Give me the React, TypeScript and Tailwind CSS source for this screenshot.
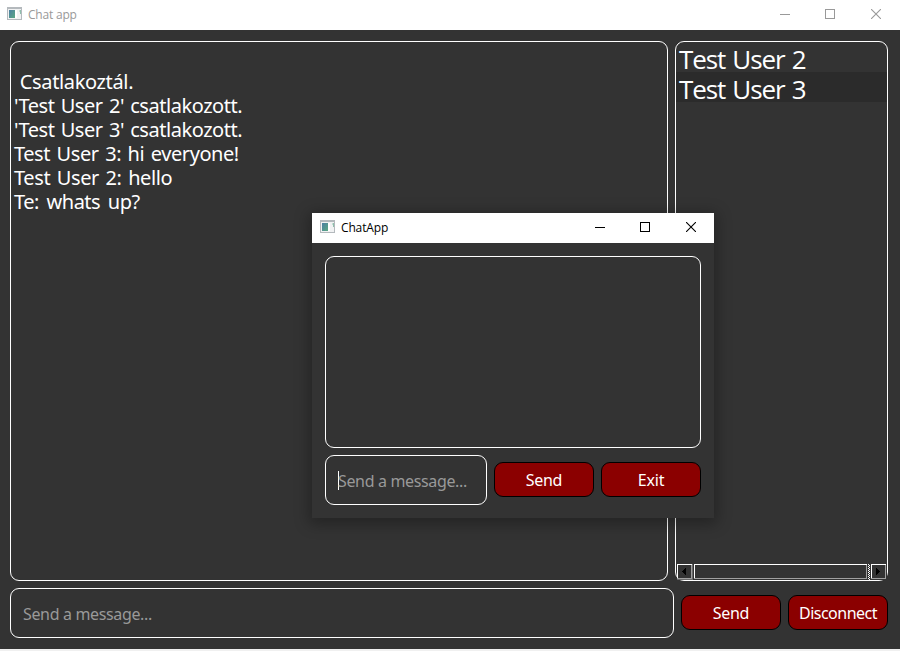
import React from "react";

function AppIcon() {
  return (
    <svg width="15" height="13" viewBox="0 0 15 13" shapeRendering="crispEdges" className="mb-[3px] shrink-0">
      <defs>
        <linearGradient id="pane" x1="0" y1="0" x2="1" y2="1">
          <stop offset="0" stopColor="#4b7fa3" />
          <stop offset="1" stopColor="#5aa882" />
        </linearGradient>
      </defs>
      <rect width="15" height="13" fill="#b4b9bd" />
      <rect x="1" y="2" width="13" height="10" fill="#f1f2f3" />
      <rect x="2" y="3" width="6" height="8" fill="url(#pane)" />
      <rect x="8" y="3" width="2" height="8" fill="#ffffff" />
      <rect x="12" y="3" width="1" height="2" fill="#c5ddd4" />
      <rect x="13" y="3" width="1" height="4" fill="#8fbfac" />
    </svg>
  );
}

function TitleBar({ title, active }: { title: string; active?: boolean }) {
  return (
    <div className={`flex h-[30px] shrink-0 items-center bg-white ${active ? "pr-[17px] pl-2 text-black" : "pr-[18px] pl-[7px] text-[#999999]"}`}>
      <AppIcon />
      <span className={`ml-1.5 font-['Open_Sans','Noto_Sans',sans-serif] text-[12px] leading-[16px] ${active ? "tracking-[-0.15px]" : "tracking-[-0.2px]"}`}>
        {title}
      </span>
      <div className="mb-0.5 ml-auto flex items-center">
        <svg width="10" height="10" shapeRendering="crispEdges"><path d="M0 5.5h10" stroke="currentColor" /></svg>
        <svg width="10" height="10" shapeRendering="crispEdges" className="ml-[35px]"><path d="M.5.5h9v9h-9z" fill="none" stroke="currentColor" /></svg>
        <svg width="10" height="10" className="mr-px ml-9"><path d="M0 0l10 10M10 0l-10 10" stroke="currentColor" strokeWidth="1.1" /></svg>
      </div>
    </div>
  );
}

function RedButton({ label, tracking }: { label: string; tracking: string }) {
  return (
    <button className={`mb-px flex h-[35px] w-[100px] shrink-0 items-center justify-center rounded-[9px] border border-black bg-[#8b0000] pt-px font-['Noto_Sans',sans-serif] text-[16px] leading-[24px] text-white ${tracking}`}>
      {label}
    </button>
  );
}

function Placeholder() {
  return <span className="block pt-0.5 font-['Noto_Sans',sans-serif] text-[16px] tracking-[-0.35px] whitespace-nowrap text-[#999999]">Send a message...</span>;
}

const messages = [
  { text: "\u00a0Csatlakoztál.", spacing: "tracking-[-0.36px] [word-spacing:1px]" },
  { text: "'Test User 2' csatlakozott.", spacing: "tracking-[-0.45px] [word-spacing:1.5px]" },
  { text: "'Test User 3' csatlakozott.", spacing: "tracking-[-0.45px] [word-spacing:1.5px]" },
  { text: "Test User 3: hi everyone!", spacing: "tracking-[-0.44px] [word-spacing:1.8px]" },
  { text: "Test User 2: hello", spacing: "tracking-[-0.4px] [word-spacing:1.8px]" },
  { text: "Te: whats up?", spacing: "tracking-[-0.5px] [word-spacing:3px]" },
];

function ScrollBar() {
  return (
    <svg width="210" height="16" shapeRendering="crispEdges" className="ml-px block">
      <rect width="210" height="16" fill="#333333" />
      <path d="M.5 15V.5H15M17.5 15V.5H190M194.5 15V.5H209" fill="none" stroke="#ffffff" />
      <path d="M0 14.5H15M14.5 1V15M17 14.5H190M189.5 1V15M194 14.5H209M208.5 1V15" stroke="#a0a0a0" />
      <path d="M0 15.5H16M15.5 0V16" stroke="#696969" />
      <path d="M5 7h1v-1h1v-1h1v-1h1v7h-1v-1h-1v-1h-1v-1h-1z" fill="#000000" />
      <path d="M199 4h1v1h1v1h1v1h1v1h-1v1h-1v1h-1v1h-1z" fill="#000000" />
      <path d="M191.5 0V16" stroke="#ffffff" strokeDasharray="1 1" />
      <path d="M192.5 1V16" stroke="#ffffff" strokeDasharray="1 1" />
    </svg>
  );
}

function ChatDialog() {
  return (
    <div className="absolute top-[213px] left-[312px] flex h-[305px] w-[402px] flex-col bg-[#333333] shadow-[0_3px_14px_3px_rgba(0,0,0,0.3)]">
      <TitleBar title="ChatApp" active />
      <div className="flex flex-1 flex-col gap-[7px] p-[13px]">
        <div className="h-[192px] rounded-[9px] border border-white" />
        <div className="flex items-center gap-[7px]">
          <div className="flex h-[50px] w-[162px] items-center rounded-[9px] border border-white pl-3">
            <span className="h-[19px] w-px bg-white" />
            <span className="-ml-px"><Placeholder /></span>
          </div>
          <RedButton label="Send" tracking="tracking-[-0.3px]" />
          <RedButton label="Exit" tracking="tracking-[-0.2px]" />
        </div>
      </div>
    </div>
  );
}

export default function App() {
  return (
    <div className="relative flex h-[651px] w-[900px] flex-col overflow-hidden bg-[#f0f0f0]">
      <TitleBar title="Chat app" />
      <div className="flex h-[619px] flex-col gap-[7px] bg-[#333333] pt-[11px] pl-[10px]">
        <div className="flex h-[540px] gap-[7px]">
          <div className="w-[658px] rounded-[9px] border border-white pt-[28px] pl-[3px] font-['Noto_Sans',sans-serif] text-[20px] leading-[24px] text-white">
            {messages.map((m) => (
              <div key={m.text} className={`whitespace-nowrap ${m.spacing}`}>{m.text}</div>
            ))}
          </div>
          <div className="flex w-[213px] flex-col rounded-[9px] border border-white font-['Open_Sans','Noto_Sans',sans-serif] text-[26px] leading-[26px] tracking-[-1.1px] text-white [word-spacing:1.5px]">
            <div className="h-[30px] pt-1 pl-[3px]">Test User 2</div>
            <div className="h-[30px] bg-[#2b2b2b] pt-1 pl-[3px]">Test User 3</div>
            <div className="mt-auto"><ScrollBar /></div>
          </div>
        </div>
        <div className="flex items-center gap-[7px]">
          <div className="flex h-[50px] w-[664px] items-center rounded-[9px] border border-white pl-3">
            <Placeholder />
          </div>
          <RedButton label="Send" tracking="tracking-[-0.3px]" />
          <RedButton label="Disconnect" tracking="tracking-[-0.5px]" />
        </div>
      </div>
      <ChatDialog />
    </div>
  );
}
